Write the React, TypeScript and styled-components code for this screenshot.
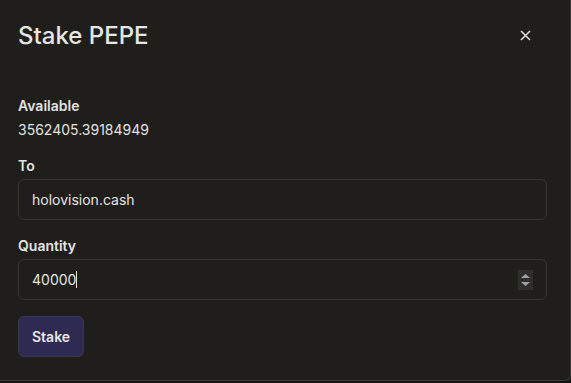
import React from "react";
import styled, { createGlobalStyle } from "styled-components";

const Global = createGlobalStyle`
  html, body { margin: 0; padding: 0; background: #141414; }
  body { font-family: Inter, "Noto Sans", sans-serif; -webkit-font-smoothing: antialiased; }
  * { box-sizing: border-box; }
`;

const Modal = styled.div`
  width: 571px;
  height: 381px;
  background: #1f1e1b;
  border-right: 1px solid #3b3a37;
  border-bottom: 1px solid #3b3a37;
  border-bottom-right-radius: 6px;
  color: #e4e4e4;
  display: flex;
  flex-direction: column;
`;

const Header = styled.div`
  display: flex;
  align-items: center;
  justify-content: space-between;
  padding: 14px 38px 0 18px;
  height: 56px;
`;

const Title = styled.h2`
  margin: 0;
  font-size: 24px;
  font-weight: 500;
  color: #e6e6e6;
`;

const Close = styled.button`
  background: none;
  border: none;
  padding: 0;
  width: 14px;
  height: 14px;
  display: flex;
  align-items: center;
  justify-content: center;
  color: #e4e4e4;
  cursor: pointer;
`;

const Body = styled.div`
  padding: 40px 23px 0 18px;
  display: flex;
  flex-direction: column;
`;

const Label = styled.div`
  font-size: 14px;
  font-weight: 600;
  color: #e2e2e2;
  line-height: 20px;
`;

const Value = styled.div`
  font-size: 14px;
  color: #e2e2e2;
  line-height: 20px;
  margin-top: 4px;
  margin-bottom: 16px;
`;

const Group = styled.div<{ $mb?: number }>`
  display: flex;
  flex-direction: column;
  gap: 3px;
  margin-bottom: ${(p) => p.$mb ?? 0}px;
`;

const Field = styled.div`
  position: relative;
  height: 41px;
  border: 1px solid #373632;
  border-radius: 6px;
  padding: 0 13px;
  display: flex;
  align-items: center;
  font-size: 14px;
  color: #e4e4e4;
`;

const Caret = styled.span`
  display: inline-block;
  width: 1px;
  height: 17px;
  background: #e4e4e4;
`;

const Spinner = styled.div`
  position: absolute;
  right: 13px;
  top: 10px;
  width: 15px;
  height: 20px;
  background: #2e2e2e;
  display: flex;
  align-items: center;
  justify-content: center;
`;

const Button = styled.button`
  align-self: flex-start;
  height: 41px;
  padding: 0 13px;
  background: #2f2a52;
  border: 1px solid #3a3657;
  border-radius: 6px;
  color: #e6e6e6;
  font-family: inherit;
  font-size: 14px;
  font-weight: 600;
`;

export default function App() {
  return (
    <>
      <Global />
      <Modal>
        <Header>
          <Title>Stake PEPE</Title>
          <Close aria-label="Close">
            <svg width="11" height="11" viewBox="0 0 11 11">
              <path d="M1 1 L10 10 M10 1 L1 10" stroke="currentColor" strokeWidth="1.5" />
            </svg>
          </Close>
        </Header>
        <Body>
          <Label>Available</Label>
          <Value>3562405.39184949</Value>
          <Group $mb={16}>
            <Label>To</Label>
            <Field>holovision.cash</Field>
          </Group>
          <Group $mb={16}>
            <Label>Quantity</Label>
            <Field>
              40000
              <Caret />
              <Spinner>
                <svg width="11" height="16" viewBox="0 0 11 16">
                  <path d="M5.5 2 L10 6 L1 6 Z" fill="#a3a3a3" />
                  <path d="M1 10 L10 10 L5.5 14 Z" fill="#a3a3a3" />
                </svg>
              </Spinner>
            </Field>
          </Group>
          <Button>Stake</Button>
        </Body>
      </Modal>
    </>
  );
}
